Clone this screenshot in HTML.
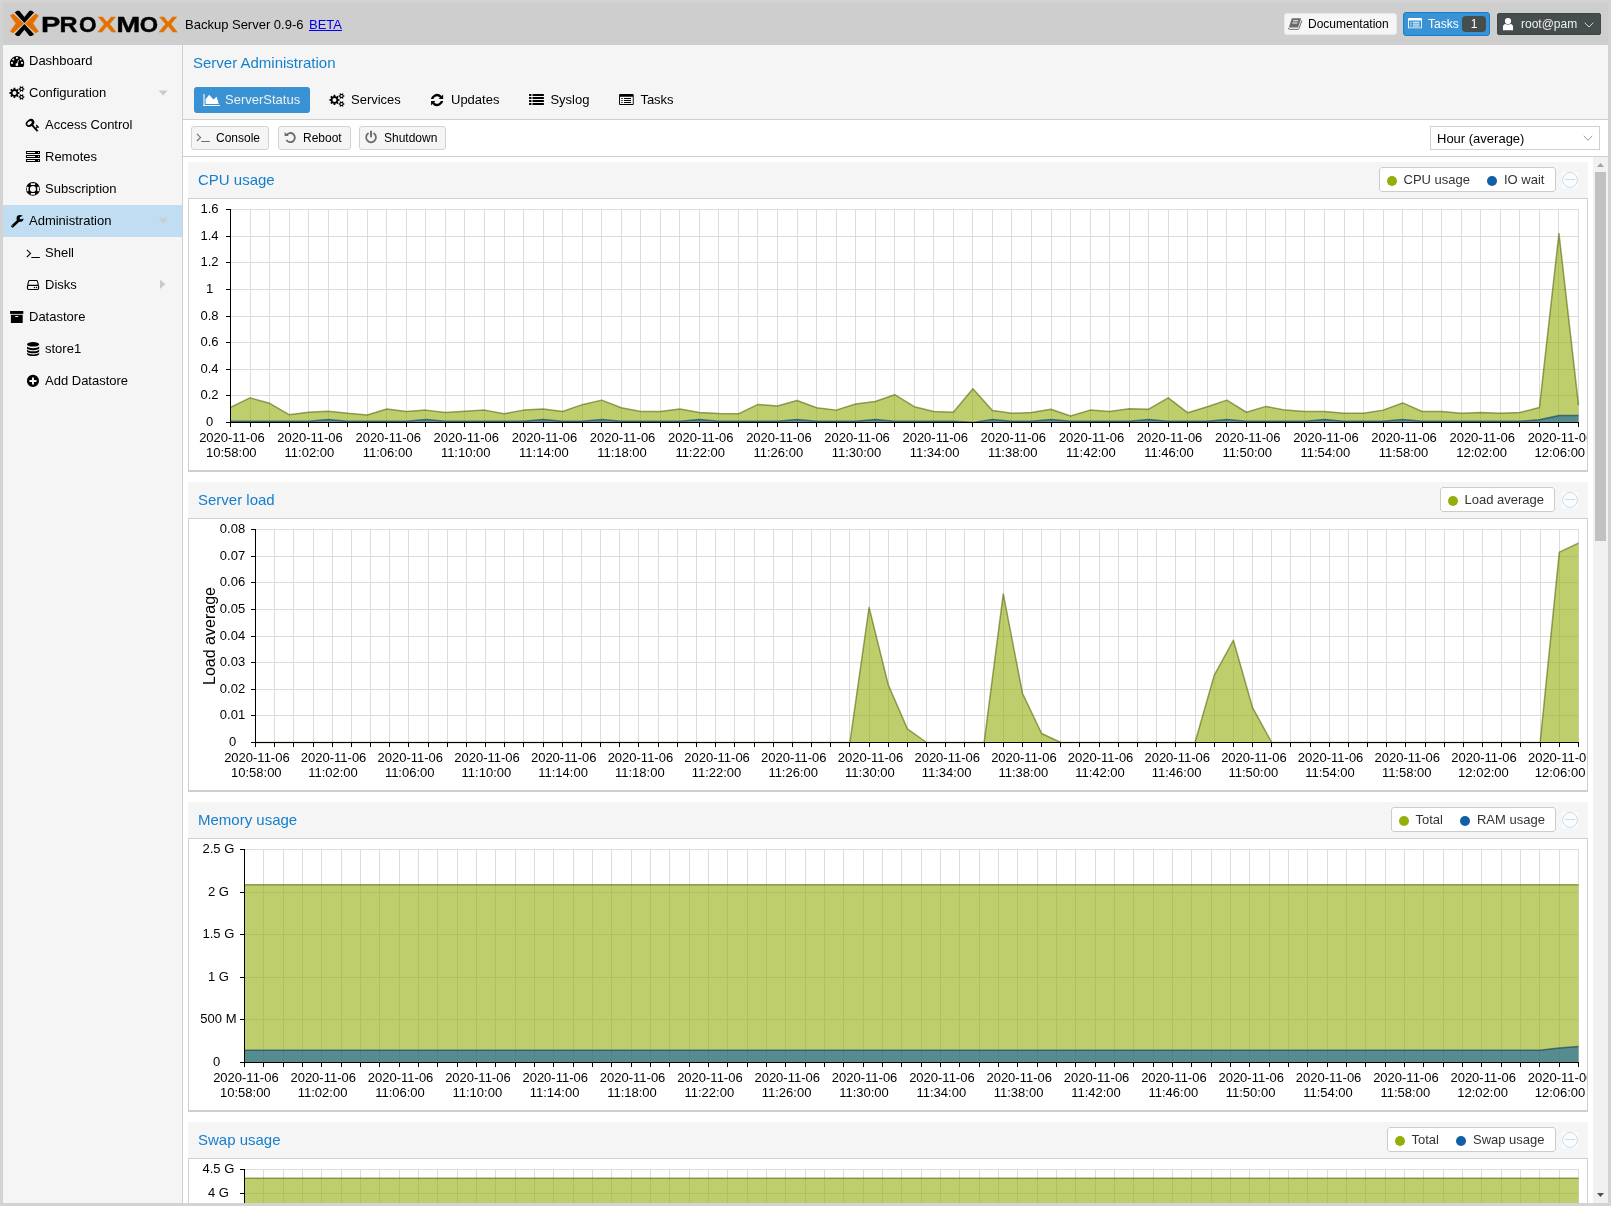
<!DOCTYPE html>
<html lang="en"><head><meta charset="utf-8"><title>Proxmox Backup Server - Server Administration</title>
<style>
html,body{margin:0;padding:0}
body{width:1611px;height:1206px;overflow:hidden;background:#d3d3d3;font-family:"Liberation Sans",sans-serif;font-size:13px;color:#000;position:relative}
div,span,svg,a{position:absolute;box-sizing:border-box}
.ic{overflow:visible}
#vp{left:3px;top:3px;width:1605px;height:1200px;background:#cecece;overflow:hidden}
#side{left:3px;top:45px;width:180px;height:1158px;background:#f5f5f5;border-right:1px solid #cfcfcf}
.row{left:0;width:179px;height:32px;line-height:32px;white-space:nowrap}
.row span{position:absolute;top:0}
.row.sel{background:#c1ddf1}
#main{left:183px;top:45px;width:1425px;height:1158px;background:#f5f5f5;overflow:hidden}
#title{left:10px;top:9px;font-size:15px;line-height:18px;color:#157fcc;white-space:nowrap}
#tabline{left:0;top:74px;width:1425px;height:1px;background:#cfcfcf}
.tab{top:42px;height:26px;line-height:26px;white-space:nowrap;font-size:13px;color:#000;border-radius:3px}
.tab.act{background:#3892d4;color:#f0f0f0}
#tbar{left:0;top:75px;width:1425px;height:37px;background:#fff;border-bottom:1px solid #cfcfcf}
.btn{top:6px;height:24px;background:#f5f5f5;border:1px solid #d3d3d3;border-radius:3px;font-size:12px;line-height:22px;white-space:nowrap;color:#000}
.btn span{left:24px;top:0}
#combo{left:1247px;top:6px;width:170px;height:24px;background:#fff;border:1px solid #cfcfcf;font-size:13px;line-height:22px}
#scroll{left:0;top:112px;width:1410px;height:1046px;background:#fff;overflow:hidden}
#sbar{left:1410px;top:112px;width:15px;height:1046px;background:#f1f1f1}
#thumb{left:2px;top:15px;width:11px;height:369px;background:#c1c1c1}
.ph{left:188px;width:1400px;height:36px;background:#f5f5f5}
.pt{left:10px;top:9px;font-size:15px;line-height:18px;color:#157fcc;white-space:nowrap}
.pb{left:188px;width:1400px;height:274px;background:#fff;border:1px solid #cfcfcf;border-bottom-width:2px}
.lg{height:25px;background:#fff;white-space:nowrap;font-size:13px;line-height:23px;color:#333;padding:1px}
.lg b{position:absolute;left:0;top:0;right:0;bottom:0;border:1px solid #ccc;border-radius:3px;box-sizing:border-box}
.li{position:relative;display:inline-block;padding:0 10.5px 0 23.5px;height:23px}
.li i{position:absolute;left:7px;top:8px;width:10px;height:10px;border-radius:5px}
.tool{left:1562px;width:16px;height:16px;background:#fcfcfc}
.tool svg{left:0;top:0}
.ch{overflow:hidden}
#page{left:0;top:0;width:1611px;height:1206px}
#root{left:0;top:0;width:1611px;height:1206px;will-change:transform}
</style></head><body>
<div id="root">
<div id="vp"></div>

<div id="hdr" style="left:3px;top:3px;width:1605px;height:42px">
<svg style="left:0;top:0" width="185" height="42" viewBox="3 3 185 42"><title>PROXMOX</title><path fill="#e57000" d="M10.0 15.4L13.3 13.5L23.8 23.4L13.3 33.3L10.0 31.5L15.7 23.4Z"/><path fill="#e57000" d="M38.8 15.4L35.5 13.5L25.0 23.4L35.5 33.3L38.8 31.5L33.1 23.4Z"/><path fill="#000" d="M14.7 12.6L17.0 10.8H19.3L24.4 17.0L29.5 10.8H31.8L34.1 12.6L24.4 22.9Z"/><path fill="#000" d="M14.7 34.2L17.0 36.0H19.3L24.4 29.8L29.5 36.0H31.8L34.1 34.2L24.4 23.9Z"/><text transform="translate(41.08,31.7) scale(1.279,1)" font-family='"Liberation Sans", sans-serif' font-weight="bold" font-size="22.7" fill="#000" stroke="#000" stroke-width="0.45" vector-effect="non-scaling-stroke" stroke-linejoin="round">P</text><text transform="translate(59.44,31.7) scale(1.104,1)" font-family='"Liberation Sans", sans-serif' font-weight="bold" font-size="22.7" fill="#000" stroke="#000" stroke-width="0.45" vector-effect="non-scaling-stroke" stroke-linejoin="round">R</text><text transform="translate(79.01,31.7) scale(0.994,1)" font-family='"Liberation Sans", sans-serif' font-weight="bold" font-size="22.7" fill="#000" stroke="#000" stroke-width="0.45" vector-effect="non-scaling-stroke" stroke-linejoin="round">O</text><text transform="translate(97.55,31.7) scale(1.238,1)" font-family='"Liberation Sans", sans-serif' font-weight="bold" font-size="22.7" fill="#e57000" stroke="#e57000" stroke-width="0.45" vector-effect="non-scaling-stroke" stroke-linejoin="round">X</text><text transform="translate(116.28,31.7) scale(1.277,1)" font-family='"Liberation Sans", sans-serif' font-weight="bold" font-size="22.7" fill="#000" stroke="#000" stroke-width="0.45" vector-effect="non-scaling-stroke" stroke-linejoin="round">M</text><text transform="translate(139.67,31.7) scale(1.038,1)" font-family='"Liberation Sans", sans-serif' font-weight="bold" font-size="22.7" fill="#000" stroke="#000" stroke-width="0.45" vector-effect="non-scaling-stroke" stroke-linejoin="round">O</text><text transform="translate(158.75,31.7) scale(1.238,1)" font-family='"Liberation Sans", sans-serif' font-weight="bold" font-size="22.7" fill="#e57000" stroke="#e57000" stroke-width="0.45" vector-effect="non-scaling-stroke" stroke-linejoin="round">X</text></svg>
<span style="left:182px;top:14px;font-size:13px;line-height:16px;white-space:nowrap">Backup Server 0.9-6</span>
<a style="left:306px;top:14px;font-size:13px;line-height:16px;color:#0000ee;text-decoration:underline;white-space:nowrap">BETA</a>
<div style="left:1281px;top:10px;width:113px;height:22px;background:#f5f5f5;border:1px solid #e9e9e9;border-radius:3px;font-size:12px;line-height:20px"><svg class="ic" style="left:2px;top:2.3px" width="15.6" height="15.6" viewBox="0 0 16 16" fill="#6b6b6b" color="#6b6b6b" ><path fill-rule="evenodd" d="M5.5 2.2H14.0Q14.6 2.2 14.4 2.8L11.6 11.2Q11.4 11.8 10.8 11.8H2.6Q1.8 11.8 2.1 11.0L4.8 2.9Q5.0 2.2 5.5 2.2ZM6.3 4.4L6.0 5.4H11.3L11.6 4.4ZM5.6 6.6L5.3 7.6H10.6L10.9 6.6Z"/><path d="M15.3 4.6L12.3 13.0Q12.1 13.7 11.3 13.7H2.8Q1.3 13.7 1.5 12.3" fill="none" stroke="currentColor" stroke-width="1.0"/></svg><span style="left:23px;top:0">Documentation</span></div>
<div style="left:1400px;top:9px;width:87px;height:24px;background:#3892d4;border:1px solid #157fd0;border-radius:3px;font-size:12px;line-height:22px;color:#fff"><svg class="ic" style="left:3px;top:3.1px" width="15.3" height="15.3" viewBox="0 0 16 16" fill="#fff" color="#fff" ><path fill-rule="evenodd" d="M2.1 1.97H14.7Q15.7 1.97 15.7 2.97V11.9Q15.7 12.9 14.7 12.9H2.1Q1.07 12.9 1.07 11.9V2.97Q1.07 1.97 2.1 1.97ZM2.0 4.75V12.0H14.8V4.75Z"/><rect x="3.1" y="6.0" width="1.7" height="1" opacity="0.75"/><rect x="6.0" y="6.0" width="7.0" height="1"/><rect x="3.1" y="8.0" width="1.7" height="1" opacity="0.75"/><rect x="6.0" y="8.0" width="7.0" height="1"/><rect x="3.1" y="10.0" width="1.7" height="1" opacity="0.75"/><rect x="6.0" y="10.0" width="7.0" height="1"/></svg><span style="left:24px;top:0">Tasks</span><span style="left:58px;top:3px;width:24px;height:16px;border-radius:4px;background:#464d4d;color:#fff;text-align:center;line-height:16px;font-size:12px">1</span></div>
<div style="left:1494px;top:10px;width:104px;height:22px;background:#464d4d;border:1px solid #3f4545;border-radius:2px;font-size:12px;line-height:20px;color:#f0f0f0"><svg class="ic" style="left:3px;top:3px" width="14" height="14" viewBox="0 0 16 16" fill="#fff" color="#fff" ><circle cx="8" cy="4.6" r="3.6"/><path d="M2.2 14.9V11.6Q2.2 8.2 5.2 7.9Q8 9.6 10.8 7.9Q13.8 8.2 13.8 11.6V14.9Q13.8 15.2 13 15.2H3Q2.2 15.2 2.2 14.9Z"/></svg><span style="left:23px;top:0">root@pam</span><svg style="left:86px;top:8px" width="10" height="6" viewBox="0 0 10 6"><path d="M0.7 0.7L5 5L9.3 0.7" fill="none" stroke="#d4d4d4" stroke-width="1.0"/></svg></div>
</div>
<div id="side">
<div class="row" style="top:0px"><svg class="ic" style="left:6px;top:8px" width="16" height="16" viewBox="0 0 16 16" fill="#000" color="#000" ><path d="M1.85 13.9 A7.2 7.2 0 1 1 14.2 13.9Z"/><circle cx="3.0" cy="9.9" r="1.05" fill="#f5f5f5"/><circle cx="4.3" cy="6.5" r="1.05" fill="#f5f5f5"/><circle cx="7.95" cy="4.9" r="1.05" fill="#f5f5f5"/><circle cx="11.7" cy="6.5" r="1.05" fill="#f5f5f5"/><circle cx="13.0" cy="9.9" r="1.05" fill="#f5f5f5"/><path d="M9.5 7.1L8.1 11.4" stroke="#f5f5f5" stroke-width="0.9" fill="none"/><circle cx="7.9" cy="11.7" r="1.35" fill="#f5f5f5"/></svg><span style="left:26px">Dashboard</span></div>
<div class="row" style="top:32px"><svg class="ic" style="left:6px;top:8px" width="16" height="16" viewBox="0 0 16 16" fill="#000" color="#000" ><path fill-rule="evenodd" d="M9.05 6.90L10.54 7.14L10.54 8.76L9.05 9.00L8.74 9.76L9.62 10.98L8.48 12.12L7.26 11.24L6.50 11.55L6.26 13.04L4.64 13.04L4.40 11.55L3.64 11.24L2.42 12.12L1.28 10.98L2.16 9.76L1.85 9.00L0.36 8.76L0.36 7.14L1.85 6.90L2.16 6.14L1.28 4.92L2.42 3.78L3.64 4.66L4.40 4.35L4.64 2.86L6.26 2.86L6.50 4.35L7.26 4.66L8.48 3.78L9.62 4.92L8.74 6.14ZM7.45 7.95A2.0 2.0 0 1 0 3.45 7.95A2.0 2.0 0 1 0 7.45 7.95Z"/><path fill-rule="evenodd" d="M14.36 3.26L15.39 3.39L15.39 4.61L14.36 4.74L14.07 5.24L14.47 6.19L13.41 6.81L12.79 5.98L12.21 5.98L11.59 6.81L10.53 6.19L10.93 5.24L10.64 4.74L9.61 4.61L9.61 3.39L10.64 3.26L10.93 2.76L10.53 1.81L11.59 1.19L12.21 2.02L12.79 2.02L13.41 1.19L14.47 1.81L14.07 2.76ZM13.55 4.00A1.05 1.05 0 1 0 11.45 4.00A1.05 1.05 0 1 0 13.55 4.00Z"/><path fill-rule="evenodd" d="M14.36 11.26L15.39 11.39L15.39 12.61L14.36 12.74L14.07 13.24L14.47 14.19L13.41 14.81L12.79 13.98L12.21 13.98L11.59 14.81L10.53 14.19L10.93 13.24L10.64 12.74L9.61 12.61L9.61 11.39L10.64 11.26L10.93 10.76L10.53 9.81L11.59 9.19L12.21 10.02L12.79 10.02L13.41 9.19L14.47 9.81L14.07 10.76ZM13.55 12.00A1.05 1.05 0 1 0 11.45 12.00A1.05 1.05 0 1 0 13.55 12.00Z"/></svg><span style="left:26px">Configuration</span><svg style="left:155px;top:13px" width="11" height="6" viewBox="0 0 11 6"><path d="M0.6 0.5H9.6L5.1 5.4Z" fill="#cbcbcb"/></svg></div>
<div class="row" style="top:64px"><svg class="ic" style="left:22px;top:8px" width="16" height="16" viewBox="0 0 16 16" fill="#000" color="#000" ><g transform="rotate(-37 5.05 5.95)"><path fill-rule="evenodd" d="M0.4 5.95A4.65 3.45 0 1 0 9.7 5.95A4.65 3.45 0 1 0 0.4 5.95ZM1.95 5.7A2.65 1.5 0 1 0 7.25 5.7A2.65 1.5 0 1 0 1.95 5.7Z"/></g><path d="M6.9 7.9L12.6 14.2" stroke-width="1.9" stroke="currentColor" fill="none"/><path d="M11.15 8.05L13.8 10.65M12.4 9.35L11.2 11.4" stroke-width="1.25" stroke="currentColor" fill="none"/></svg><span style="left:42px">Access Control</span></div>
<div class="row" style="top:96px"><svg class="ic" style="left:22px;top:8px" width="16" height="16" viewBox="0 0 16 16" fill="#000" color="#000" ><rect x="0.97" y="2" width="14.05" height="3" rx="0.3"/><rect x="1.9" y="3" width="8.2" height="1" rx="0.3" fill="#f5f5f5"/><circle cx="13.5" cy="3.5" r="0.6" fill="#f5f5f5"/><rect x="0.97" y="6" width="14.05" height="3" rx="0.3"/><rect x="1.9" y="7" width="8.2" height="1" rx="0.3" fill="#f5f5f5"/><circle cx="13.5" cy="7.5" r="0.6" fill="#f5f5f5"/><rect x="0.97" y="10" width="14.05" height="3" rx="0.3"/><rect x="1.9" y="11" width="8.2" height="1" rx="0.3" fill="#f5f5f5"/><circle cx="13.5" cy="11.5" r="0.6" fill="#f5f5f5"/></svg><span style="left:42px">Remotes</span></div>
<div class="row" style="top:128px"><svg class="ic" style="left:22px;top:8px" width="16" height="16" viewBox="0 0 16 16" fill="#000" color="#000" ><path fill-rule="evenodd" d="M14.90 7.90A6.97 6.97 0 1 0 0.96 7.90A6.97 6.97 0 1 0 14.90 7.90ZM10.93 7.90A3.0 3.0 0 1 0 4.93 7.90A3.0 3.0 0 1 0 10.93 7.90Z"/><rect x="5.75" y="2.2" width="4.40" height="1.85" rx="0.35" fill="#f5f5f5"/><rect x="5.75" y="11.95" width="4.40" height="1.75" rx="0.35" fill="#f5f5f5"/><rect x="1.75" y="5.8" width="1.75" height="4.35" rx="0.35" fill="#f5f5f5"/><rect x="12.2" y="5.8" width="1.80" height="4.35" rx="0.35" fill="#f5f5f5"/></svg><span style="left:42px">Subscription</span></div>
<div class="row sel" style="top:160px"><svg class="ic" style="left:6px;top:8px" width="16" height="16" viewBox="0 0 16 16" fill="#000" color="#000" ><path d="M3.5 13.2L9.6 7.5" stroke="currentColor" stroke-width="2.7" stroke-linecap="round" fill="none"/><circle cx="11.0" cy="5.4" r="3.45"/><path d="M12.0 4.95L16.5 3.3" stroke="#c1ddf1" stroke-width="2.55" stroke-linecap="round" fill="none"/><circle cx="3.7" cy="12.75" r="0.5" fill="#c1ddf1" opacity="0.8"/></svg><span style="left:26px">Administration</span><svg style="left:155px;top:13px" width="11" height="6" viewBox="0 0 11 6"><path d="M0.6 0.5H9.6L5.1 5.4Z" fill="#cbcbcb"/></svg></div>
<div class="row" style="top:192px"><svg class="ic" style="left:22px;top:8px" width="16" height="16" viewBox="0 0 16 16" fill="#000" color="#000" ><path d="M1.9 4.9L5.55 8.45L1.9 12.0" fill="none" stroke="currentColor" stroke-width="1.08"/><path d="M6.3 12.5H14.85" fill="none" stroke="currentColor" stroke-width="1"/></svg><span style="left:42px">Shell</span></div>
<div class="row" style="top:224px"><svg class="ic" style="left:22px;top:8px" width="16" height="16" viewBox="0 0 16 16" fill="#000" color="#000" ><path d="M2.6 8.3L3.75 3.95Q3.9 3.45 4.45 3.45H11.6Q12.15 3.45 12.3 3.95L13.45 8.3" fill="none" stroke="currentColor" stroke-width="1.05"/><rect x="2.45" y="8.3" width="11.15" height="4.2" rx="1.15" fill="none" stroke="currentColor" stroke-width="1.15"/><circle cx="9.42" cy="10.45" r="0.72"/><circle cx="11.5" cy="10.45" r="0.72"/></svg><span style="left:42px">Disks</span><svg style="left:157px;top:10px" width="6" height="11" viewBox="0 0 6 11"><path d="M0 0.6V9.9L5.4 5.25Z" fill="#cbcbcb"/></svg></div>
<div class="row" style="top:256px"><svg class="ic" style="left:6px;top:8px" width="16" height="16" viewBox="0 0 16 16" fill="#000" color="#000" ><rect x="1.1" y="2.0" width="13.2" height="2.9"/><path fill-rule="evenodd" d="M1.9 5.75H13.7V14H1.9ZM6.2 7.0V8.0H9.3V7.0Z"/></svg><span style="left:26px">Datastore</span></div>
<div class="row" style="top:288px"><svg class="ic" style="left:22px;top:8px" width="16" height="16" viewBox="0 0 16 16" fill="#000" color="#000" ><ellipse cx="8.1" cy="3.3" rx="6.1" ry="2.3"/><path d="M2 5.15A6.1 2.0 0 0 0 14.2 5.15V7.2A6.1 2.0 0 0 1 2 7.2ZM2 8.3A6.1 2.0 0 0 0 14.2 8.3V10.35A6.1 2.0 0 0 1 2 10.35ZM2 11.45A6.1 2.0 0 0 0 14.2 11.45V13.0A6.1 2.0 0 0 1 2 13.0Z"/></svg><span style="left:42px">store1</span></div>
<div class="row" style="top:320px"><svg class="ic" style="left:22px;top:8px" width="16" height="16" viewBox="0 0 16 16" fill="#000" color="#000" ><path fill-rule="evenodd" d="M14.00 7.90A6.05 6.05 0 1 0 1.90 7.90A6.05 6.05 0 1 0 14.00 7.90ZM6.95 4.4H8.95V6.9H11.5V8.9H8.95V11.45H6.95V8.9H4.4V6.9H6.95Z"/></svg><span style="left:42px">Add Datastore</span></div>
</div>
<div id="main">
<div id="title">Server Administration</div>
<div class="tab act" style="left:11px;width:116px"><svg class="ic" style="left:9px;top:5px" width="16" height="16" viewBox="0 0 16 16" fill="#fff" color="#fff" ><rect x="0" y="2" width="2.1" height="12" opacity="0.55"/><rect x="0.2" y="13" width="16.7" height="1"/><path d="M2.66 11.9V7.2L6.14 2.75L10.4 7.5L13.7 4.7L15.8 11.9Z"/></svg><span style="left:31px;top:0">ServerStatus</span></div>
<div class="tab" style="left:137px;width:90px"><svg class="ic" style="left:9px;top:5px" width="16" height="16" viewBox="0 0 16 16" fill="#000" color="#000" ><path fill-rule="evenodd" d="M9.05 6.90L10.54 7.14L10.54 8.76L9.05 9.00L8.74 9.76L9.62 10.98L8.48 12.12L7.26 11.24L6.50 11.55L6.26 13.04L4.64 13.04L4.40 11.55L3.64 11.24L2.42 12.12L1.28 10.98L2.16 9.76L1.85 9.00L0.36 8.76L0.36 7.14L1.85 6.90L2.16 6.14L1.28 4.92L2.42 3.78L3.64 4.66L4.40 4.35L4.64 2.86L6.26 2.86L6.50 4.35L7.26 4.66L8.48 3.78L9.62 4.92L8.74 6.14ZM7.45 7.95A2.0 2.0 0 1 0 3.45 7.95A2.0 2.0 0 1 0 7.45 7.95Z"/><path fill-rule="evenodd" d="M14.36 3.26L15.39 3.39L15.39 4.61L14.36 4.74L14.07 5.24L14.47 6.19L13.41 6.81L12.79 5.98L12.21 5.98L11.59 6.81L10.53 6.19L10.93 5.24L10.64 4.74L9.61 4.61L9.61 3.39L10.64 3.26L10.93 2.76L10.53 1.81L11.59 1.19L12.21 2.02L12.79 2.02L13.41 1.19L14.47 1.81L14.07 2.76ZM13.55 4.00A1.05 1.05 0 1 0 11.45 4.00A1.05 1.05 0 1 0 13.55 4.00Z"/><path fill-rule="evenodd" d="M14.36 11.26L15.39 11.39L15.39 12.61L14.36 12.74L14.07 13.24L14.47 14.19L13.41 14.81L12.79 13.98L12.21 13.98L11.59 14.81L10.53 14.19L10.93 13.24L10.64 12.74L9.61 12.61L9.61 11.39L10.64 11.26L10.93 10.76L10.53 9.81L11.59 9.19L12.21 10.02L12.79 10.02L13.41 9.19L14.47 9.81L14.07 10.76ZM13.55 12.00A1.05 1.05 0 1 0 11.45 12.00A1.05 1.05 0 1 0 13.55 12.00Z"/></svg><span style="left:31px;top:0">Services</span></div>
<div class="tab" style="left:237px;width:89px"><svg class="ic" style="left:9px;top:5px" width="16" height="16" viewBox="0 0 16 16" fill="#000" color="#000" ><clipPath id="rfa"><rect x="0" y="0" width="16" height="6.95"/></clipPath><clipPath id="rfb"><rect x="0" y="9.0" width="16" height="7"/></clipPath><path clip-path="url(#rfa)" d="M3.47 9.66A4.9 4.9 0 0 1 11.93 4.96" fill="none" stroke="currentColor" stroke-width="2.4"/><path clip-path="url(#rfb)" d="M12.67 6.30A4.9 4.9 0 0 1 4.21 11.00" fill="none" stroke="currentColor" stroke-width="2.4"/><path d="M14.1 2.4V6.95H9.7Z"/><path d="M2.04 13.56V9.0H6.44Z"/></svg><span style="left:31px;top:0">Updates</span></div>
<div class="tab" style="left:336.4px;width:80px"><svg class="ic" style="left:9px;top:5px" width="16" height="16" viewBox="0 0 16 16" fill="#000" color="#000" ><rect x="1.05" y="1.93" width="2.4" height="2.05" rx="0.3"/><rect x="4.5" y="1.93" width="11.4" height="2.05" rx="0.3"/><rect x="1.05" y="4.93" width="2.4" height="2.05" rx="0.3"/><rect x="4.5" y="4.93" width="11.4" height="2.05" rx="0.3"/><rect x="1.05" y="7.93" width="2.4" height="2.05" rx="0.3"/><rect x="4.5" y="7.93" width="11.4" height="2.05" rx="0.3"/><rect x="1.05" y="10.95" width="2.4" height="2.05" rx="0.3"/><rect x="4.5" y="10.95" width="11.4" height="2.05" rx="0.3"/></svg><span style="left:31px;top:0">Syslog</span></div>
<div class="tab" style="left:426.4px;width:74px"><svg class="ic" style="left:9px;top:5px" width="16" height="16" viewBox="0 0 16 16" fill="#000" color="#000" ><path fill-rule="evenodd" d="M2.1 1.97H14.7Q15.7 1.97 15.7 2.97V11.9Q15.7 12.9 14.7 12.9H2.1Q1.07 12.9 1.07 11.9V2.97Q1.07 1.97 2.1 1.97ZM2.0 4.75V12.0H14.8V4.75Z"/><rect x="3.1" y="6.0" width="1.7" height="1" opacity="0.75"/><rect x="6.0" y="6.0" width="7.0" height="1"/><rect x="3.1" y="8.0" width="1.7" height="1" opacity="0.75"/><rect x="6.0" y="8.0" width="7.0" height="1"/><rect x="3.1" y="10.0" width="1.7" height="1" opacity="0.75"/><rect x="6.0" y="10.0" width="7.0" height="1"/></svg><span style="left:31px;top:0">Tasks</span></div>
<div id="tabline"></div>
<div id="tbar">
<div class="btn" style="left:8px;width:78px"><svg class="ic" style="left:3.2px;top:2.2px" width="16" height="16" viewBox="0 0 16 16" fill="#6c6c6c" color="#6c6c6c" ><path d="M1.9 4.9L5.55 8.45L1.9 12.0" fill="none" stroke="currentColor" stroke-width="1.08"/><path d="M6.3 12.5H14.85" fill="none" stroke="currentColor" stroke-width="1"/></svg><span>Console</span></div>
<div class="btn" style="left:95px;width:73px"><svg class="ic" style="left:3.2px;top:2.2px" width="16" height="16" viewBox="0 0 16 16" fill="#6c6c6c" color="#6c6c6c" ><path d="M4.57 5.99A4.55 4.55 0 1 1 4.36 10.88" fill="none" stroke="currentColor" stroke-width="1.85"/><path d="M2.6 2.9V7.0H6.8Z"/></svg><span>Reboot</span></div>
<div class="btn" style="left:176px;width:87px"><svg class="ic" style="left:3.2px;top:2.2px" width="16" height="16" viewBox="0 0 16 16" fill="#6c6c6c" color="#6c6c6c" ><path d="M11.07 4.54A4.9 4.9 0 1 1 5.03 4.54" fill="none" stroke="currentColor" stroke-width="1.8" stroke-linecap="round"/><path d="M8.05 2.6V7.6" fill="none" stroke="currentColor" stroke-width="2" stroke-linecap="round"/></svg><span>Shutdown</span></div>
<div id="combo"><span style="left:6px;top:1px">Hour (average)</span><svg style="left:152.3px;top:7.6px" width="10" height="7" viewBox="0 0 10 7"><path d="M0.8 0.8L5 5.4L9.2 0.8" fill="none" stroke="#9a9a9a" stroke-width="1"/></svg></div>
</div>
<div id="scroll"></div>
<div id="sbar"><svg style="left:3px;top:5px" width="9" height="5" viewBox="0 0 9 5"><path d="M1 5L4.5 0.9L8 5Z" fill="#a3a3a3"/></svg><div id="thumb"></div><svg style="left:3px;top:1036px" width="9" height="5" viewBox="0 0 9 5"><path d="M1 0L4.5 4.1L8 0Z" fill="#505050"/></svg></div>
</div>
<div id="page" style="clip-path:inset(157px 18px 3px 183px)">
<div class="ph" style="top:162px"><span class="pt">CPU usage</span></div>
<div class="pb" style="top:198px"></div>
<div class="lg" style="left:1379px;top:167px;width:177px"><b></b><span class="li"><i style="background:#94ae0a"></i>CPU usage</span><span class="li"><i style="background:#115fa6"></i>IO wait</span></div>
<div class="tool" style="top:172px"><svg width="16" height="16" viewBox="0 0 16 16" opacity="0.3"><circle cx="8" cy="7.9" r="7.45" fill="none" stroke="#3892d4" stroke-width="1"/><path d="M3.05 7.5H13" stroke="#3892d4" stroke-width="1"/></svg></div>
<svg class="ch" style="left:189px;top:199px" width="1398" height="271" viewBox="0 0 1398 271" font-family='"Liberation Sans", sans-serif' font-size="13">
<path d="M61.5 10.0V223.0M80.5 10.0V223.0M100.5 10.0V223.0M119.5 10.0V223.0M139.5 10.0V223.0M158.5 10.0V223.0M178.5 10.0V223.0M197.5 10.0V223.0M217.5 10.0V223.0M236.5 10.0V223.0M256.5 10.0V223.0M275.5 10.0V223.0M295.5 10.0V223.0M315.5 10.0V223.0M334.5 10.0V223.0M354.5 10.0V223.0M373.5 10.0V223.0M393.5 10.0V223.0M412.5 10.0V223.0M432.5 10.0V223.0M451.5 10.0V223.0M471.5 10.0V223.0M490.5 10.0V223.0M510.5 10.0V223.0M529.5 10.0V223.0M549.5 10.0V223.0M568.5 10.0V223.0M588.5 10.0V223.0M608.5 10.0V223.0M627.5 10.0V223.0M647.5 10.0V223.0M666.5 10.0V223.0M686.5 10.0V223.0M705.5 10.0V223.0M725.5 10.0V223.0M744.5 10.0V223.0M764.5 10.0V223.0M783.5 10.0V223.0M803.5 10.0V223.0M822.5 10.0V223.0M842.5 10.0V223.0M862.5 10.0V223.0M881.5 10.0V223.0M901.5 10.0V223.0M920.5 10.0V223.0M940.5 10.0V223.0M959.5 10.0V223.0M979.5 10.0V223.0M998.5 10.0V223.0M1018.5 10.0V223.0M1037.5 10.0V223.0M1057.5 10.0V223.0M1076.5 10.0V223.0M1096.5 10.0V223.0M1115.5 10.0V223.0M1135.5 10.0V223.0M1155.5 10.0V223.0M1174.5 10.0V223.0M1194.5 10.0V223.0M1213.5 10.0V223.0M1233.5 10.0V223.0M1252.5 10.0V223.0M1272.5 10.0V223.0M1291.5 10.0V223.0M1311.5 10.0V223.0M1330.5 10.0V223.0M1350.5 10.0V223.0M1369.5 10.0V223.0M1389.5 10.0V223.0M42.0 196.5H1390.0M42.0 170.5H1390.0M42.0 143.5H1390.0M42.0 117.5H1390.0M42.0 90.5H1390.0M42.0 63.5H1390.0M42.0 37.5H1390.0M42.0 10.5H1390.0" stroke="#dcdcdc" stroke-width="1" fill="none"/>
<polygon points="41.50,223.50 41.50,208.32 61.04,198.87 80.57,204.33 100.11,215.65 119.64,213.25 139.18,212.18 158.72,214.31 178.25,215.91 197.79,210.05 217.33,212.45 236.86,211.12 256.40,213.52 275.93,212.18 295.47,211.12 315.01,214.85 334.54,211.12 354.08,210.05 373.62,212.45 393.15,205.66 412.69,201.13 432.22,208.72 451.76,212.45 471.30,212.45 490.83,210.05 510.37,213.52 529.91,214.58 549.44,214.85 568.98,205.40 588.51,206.99 608.05,201.53 627.59,208.72 647.12,211.12 666.66,205.00 686.20,202.47 705.73,195.68 725.27,207.66 744.80,212.45 764.34,213.25 783.88,189.82 803.41,211.39 822.95,214.31 842.49,213.52 862.02,210.19 881.56,216.98 901.09,211.12 920.63,212.45 940.17,209.79 959.70,210.19 979.24,198.87 998.78,213.78 1018.31,207.79 1037.85,201.13 1057.38,213.25 1076.92,207.39 1096.46,211.12 1115.99,212.45 1135.53,212.45 1155.07,214.31 1174.60,214.31 1194.14,211.12 1213.67,203.93 1233.21,212.45 1252.75,212.45 1272.28,214.31 1291.82,213.52 1311.36,214.31 1330.89,213.52 1350.43,208.46 1369.96,34.46 1389.50,206.19 1389.50,223.50" fill="#94ae0a" fill-opacity="0.6"/><polyline points="41.50,208.32 61.04,198.87 80.57,204.33 100.11,215.65 119.64,213.25 139.18,212.18 158.72,214.31 178.25,215.91 197.79,210.05 217.33,212.45 236.86,211.12 256.40,213.52 275.93,212.18 295.47,211.12 315.01,214.85 334.54,211.12 354.08,210.05 373.62,212.45 393.15,205.66 412.69,201.13 432.22,208.72 451.76,212.45 471.30,212.45 490.83,210.05 510.37,213.52 529.91,214.58 549.44,214.85 568.98,205.40 588.51,206.99 608.05,201.53 627.59,208.72 647.12,211.12 666.66,205.00 686.20,202.47 705.73,195.68 725.27,207.66 744.80,212.45 764.34,213.25 783.88,189.82 803.41,211.39 822.95,214.31 842.49,213.52 862.02,210.19 881.56,216.98 901.09,211.12 920.63,212.45 940.17,209.79 959.70,210.19 979.24,198.87 998.78,213.78 1018.31,207.79 1037.85,201.13 1057.38,213.25 1076.92,207.39 1096.46,211.12 1115.99,212.45 1135.53,212.45 1155.07,214.31 1174.60,214.31 1194.14,211.12 1213.67,203.93 1233.21,212.45 1252.75,212.45 1272.28,214.31 1291.82,213.52 1311.36,214.31 1330.89,213.52 1350.43,208.46 1369.96,34.46 1389.50,206.19" fill="none" stroke="#566506" stroke-opacity="0.6" stroke-width="1.5" stroke-linejoin="round"/>
<polygon points="41.50,223.50 41.50,222.17 61.04,222.17 80.57,222.17 100.11,222.17 119.64,222.17 139.18,220.57 158.72,222.17 178.25,222.17 197.79,222.17 217.33,222.17 236.86,220.57 256.40,222.17 275.93,222.17 295.47,222.17 315.01,222.17 334.54,222.17 354.08,220.57 373.62,222.17 393.15,222.17 412.69,220.57 432.22,222.17 451.76,222.17 471.30,222.17 490.83,222.17 510.37,220.57 529.91,222.17 549.44,222.17 568.98,222.17 588.51,222.17 608.05,220.57 627.59,222.17 647.12,222.17 666.66,222.17 686.20,220.57 705.73,222.17 725.27,222.17 744.80,222.17 764.34,222.17 783.88,223.37 803.41,220.57 822.95,222.17 842.49,222.17 862.02,220.57 881.56,222.17 901.09,222.17 920.63,222.17 940.17,222.17 959.70,220.57 979.24,222.17 998.78,222.17 1018.31,222.17 1037.85,220.57 1057.38,222.17 1076.92,222.17 1096.46,222.17 1115.99,222.17 1135.53,220.57 1155.07,222.17 1174.60,222.17 1194.14,222.17 1213.67,220.57 1233.21,222.17 1252.75,222.17 1272.28,222.17 1291.82,222.17 1311.36,222.17 1330.89,222.17 1350.43,220.84 1369.96,216.44 1389.50,216.44 1389.50,223.50" fill="#115fa6" fill-opacity="0.6"/><polyline points="41.50,222.17 61.04,222.17 80.57,222.17 100.11,222.17 119.64,222.17 139.18,220.57 158.72,222.17 178.25,222.17 197.79,222.17 217.33,222.17 236.86,220.57 256.40,222.17 275.93,222.17 295.47,222.17 315.01,222.17 334.54,222.17 354.08,220.57 373.62,222.17 393.15,222.17 412.69,220.57 432.22,222.17 451.76,222.17 471.30,222.17 490.83,222.17 510.37,220.57 529.91,222.17 549.44,222.17 568.98,222.17 588.51,222.17 608.05,220.57 627.59,222.17 647.12,222.17 666.66,222.17 686.20,220.57 705.73,222.17 725.27,222.17 744.80,222.17 764.34,222.17 783.88,223.37 803.41,220.57 822.95,222.17 842.49,222.17 862.02,220.57 881.56,222.17 901.09,222.17 920.63,222.17 940.17,222.17 959.70,220.57 979.24,222.17 998.78,222.17 1018.31,222.17 1037.85,220.57 1057.38,222.17 1076.92,222.17 1096.46,222.17 1115.99,222.17 1135.53,220.57 1155.07,222.17 1174.60,222.17 1194.14,222.17 1213.67,220.57 1233.21,222.17 1252.75,222.17 1272.28,222.17 1291.82,222.17 1311.36,222.17 1330.89,222.17 1350.43,220.84 1369.96,216.44 1389.50,216.44" fill="none" stroke="#0a3861" stroke-opacity="0.6" stroke-width="1.5" stroke-linejoin="round"/>
<path d="M41.5 10.0V224.0M41.0 223.5H1390.0M37.0 223.5H41.5M37.0 196.5H41.5M37.0 170.5H41.5M37.0 143.5H41.5M37.0 117.5H41.5M37.0 90.5H41.5M37.0 63.5H41.5M37.0 37.5H41.5M37.0 10.5H41.5M41.5 223.5V228.0M61.5 223.5V228.0M80.5 223.5V228.0M100.5 223.5V228.0M119.5 223.5V228.0M139.5 223.5V228.0M158.5 223.5V228.0M178.5 223.5V228.0M197.5 223.5V228.0M217.5 223.5V228.0M236.5 223.5V228.0M256.5 223.5V228.0M275.5 223.5V228.0M295.5 223.5V228.0M315.5 223.5V228.0M334.5 223.5V228.0M354.5 223.5V228.0M373.5 223.5V228.0M393.5 223.5V228.0M412.5 223.5V228.0M432.5 223.5V228.0M451.5 223.5V228.0M471.5 223.5V228.0M490.5 223.5V228.0M510.5 223.5V228.0M529.5 223.5V228.0M549.5 223.5V228.0M568.5 223.5V228.0M588.5 223.5V228.0M608.5 223.5V228.0M627.5 223.5V228.0M647.5 223.5V228.0M666.5 223.5V228.0M686.5 223.5V228.0M705.5 223.5V228.0M725.5 223.5V228.0M744.5 223.5V228.0M764.5 223.5V228.0M783.5 223.5V228.0M803.5 223.5V228.0M822.5 223.5V228.0M842.5 223.5V228.0M862.5 223.5V228.0M881.5 223.5V228.0M901.5 223.5V228.0M920.5 223.5V228.0M940.5 223.5V228.0M959.5 223.5V228.0M979.5 223.5V228.0M998.5 223.5V228.0M1018.5 223.5V228.0M1037.5 223.5V228.0M1057.5 223.5V228.0M1076.5 223.5V228.0M1096.5 223.5V228.0M1115.5 223.5V228.0M1135.5 223.5V228.0M1155.5 223.5V228.0M1174.5 223.5V228.0M1194.5 223.5V228.0M1213.5 223.5V228.0M1233.5 223.5V228.0M1252.5 223.5V228.0M1272.5 223.5V228.0M1291.5 223.5V228.0M1311.5 223.5V228.0M1330.5 223.5V228.0M1350.5 223.5V228.0M1369.5 223.5V228.0M1389.5 223.5V228.0" stroke="#000" stroke-width="1" fill="none"/>
<text x="20.5" y="227.1" text-anchor="middle">0</text>
<text x="20.5" y="200.1" text-anchor="middle">0.2</text>
<text x="20.5" y="174.1" text-anchor="middle">0.4</text>
<text x="20.5" y="147.1" text-anchor="middle">0.6</text>
<text x="20.5" y="121.1" text-anchor="middle">0.8</text>
<text x="20.5" y="94.1" text-anchor="middle">1</text>
<text x="20.5" y="67.1" text-anchor="middle">1.2</text>
<text x="20.5" y="41.1" text-anchor="middle">1.4</text>
<text x="20.5" y="14.1" text-anchor="middle">1.6</text>
<text x="42.9" y="242.9" text-anchor="middle">2020-11-06</text>
<text x="42.3" y="258.1" text-anchor="middle">10:58:00</text>
<text x="121.0" y="242.9" text-anchor="middle">2020-11-06</text>
<text x="120.4" y="258.1" text-anchor="middle">11:02:00</text>
<text x="199.2" y="242.9" text-anchor="middle">2020-11-06</text>
<text x="198.6" y="258.1" text-anchor="middle">11:06:00</text>
<text x="277.3" y="242.9" text-anchor="middle">2020-11-06</text>
<text x="276.7" y="258.1" text-anchor="middle">11:10:00</text>
<text x="355.5" y="242.9" text-anchor="middle">2020-11-06</text>
<text x="354.9" y="258.1" text-anchor="middle">11:14:00</text>
<text x="433.6" y="242.9" text-anchor="middle">2020-11-06</text>
<text x="433.0" y="258.1" text-anchor="middle">11:18:00</text>
<text x="511.8" y="242.9" text-anchor="middle">2020-11-06</text>
<text x="511.2" y="258.1" text-anchor="middle">11:22:00</text>
<text x="589.9" y="242.9" text-anchor="middle">2020-11-06</text>
<text x="589.3" y="258.1" text-anchor="middle">11:26:00</text>
<text x="668.1" y="242.9" text-anchor="middle">2020-11-06</text>
<text x="667.5" y="258.1" text-anchor="middle">11:30:00</text>
<text x="746.2" y="242.9" text-anchor="middle">2020-11-06</text>
<text x="745.6" y="258.1" text-anchor="middle">11:34:00</text>
<text x="824.3" y="242.9" text-anchor="middle">2020-11-06</text>
<text x="823.7" y="258.1" text-anchor="middle">11:38:00</text>
<text x="902.5" y="242.9" text-anchor="middle">2020-11-06</text>
<text x="901.9" y="258.1" text-anchor="middle">11:42:00</text>
<text x="980.6" y="242.9" text-anchor="middle">2020-11-06</text>
<text x="980.0" y="258.1" text-anchor="middle">11:46:00</text>
<text x="1058.8" y="242.9" text-anchor="middle">2020-11-06</text>
<text x="1058.2" y="258.1" text-anchor="middle">11:50:00</text>
<text x="1136.9" y="242.9" text-anchor="middle">2020-11-06</text>
<text x="1136.3" y="258.1" text-anchor="middle">11:54:00</text>
<text x="1215.1" y="242.9" text-anchor="middle">2020-11-06</text>
<text x="1214.5" y="258.1" text-anchor="middle">11:58:00</text>
<text x="1293.2" y="242.9" text-anchor="middle">2020-11-06</text>
<text x="1292.6" y="258.1" text-anchor="middle">12:02:00</text>
<text x="1371.4" y="242.9" text-anchor="middle">2020-11-06</text>
<text x="1370.8" y="258.1" text-anchor="middle">12:06:00</text>
</svg>
<div class="ph" style="top:482px"><span class="pt">Server load</span></div>
<div class="pb" style="top:518px"></div>
<div class="lg" style="left:1440px;top:487px;width:115px"><b></b><span class="li"><i style="background:#94ae0a"></i>Load average</span></div>
<div class="tool" style="top:492px"><svg width="16" height="16" viewBox="0 0 16 16" opacity="0.3"><circle cx="8" cy="7.9" r="7.45" fill="none" stroke="#3892d4" stroke-width="1"/><path d="M3.05 7.5H13" stroke="#3892d4" stroke-width="1"/></svg></div>
<svg class="ch" style="left:189px;top:519px" width="1398" height="271" viewBox="0 0 1398 271" font-family='"Liberation Sans", sans-serif' font-size="13">
<path d="M85.5 10.0V223.0M104.5 10.0V223.0M124.5 10.0V223.0M143.5 10.0V223.0M162.5 10.0V223.0M181.5 10.0V223.0M200.5 10.0V223.0M219.5 10.0V223.0M239.5 10.0V223.0M258.5 10.0V223.0M277.5 10.0V223.0M296.5 10.0V223.0M315.5 10.0V223.0M334.5 10.0V223.0M354.5 10.0V223.0M373.5 10.0V223.0M392.5 10.0V223.0M411.5 10.0V223.0M430.5 10.0V223.0M449.5 10.0V223.0M469.5 10.0V223.0M488.5 10.0V223.0M507.5 10.0V223.0M526.5 10.0V223.0M545.5 10.0V223.0M565.5 10.0V223.0M584.5 10.0V223.0M603.5 10.0V223.0M622.5 10.0V223.0M641.5 10.0V223.0M660.5 10.0V223.0M680.5 10.0V223.0M699.5 10.0V223.0M718.5 10.0V223.0M737.5 10.0V223.0M756.5 10.0V223.0M775.5 10.0V223.0M795.5 10.0V223.0M814.5 10.0V223.0M833.5 10.0V223.0M852.5 10.0V223.0M871.5 10.0V223.0M890.5 10.0V223.0M910.5 10.0V223.0M929.5 10.0V223.0M948.5 10.0V223.0M967.5 10.0V223.0M986.5 10.0V223.0M1006.5 10.0V223.0M1025.5 10.0V223.0M1044.5 10.0V223.0M1063.5 10.0V223.0M1082.5 10.0V223.0M1101.5 10.0V223.0M1121.5 10.0V223.0M1140.5 10.0V223.0M1159.5 10.0V223.0M1178.5 10.0V223.0M1197.5 10.0V223.0M1216.5 10.0V223.0M1236.5 10.0V223.0M1255.5 10.0V223.0M1274.5 10.0V223.0M1293.5 10.0V223.0M1312.5 10.0V223.0M1331.5 10.0V223.0M1351.5 10.0V223.0M1370.5 10.0V223.0M1389.5 10.0V223.0M67.0 196.5H1390.0M67.0 170.5H1390.0M67.0 143.5H1390.0M67.0 117.5H1390.0M67.0 90.5H1390.0M67.0 63.5H1390.0M67.0 37.5H1390.0M67.0 10.5H1390.0" stroke="#dcdcdc" stroke-width="1" fill="none"/>
<polygon points="66.50,223.50 66.50,223.50 85.67,223.50 104.85,223.50 124.02,223.50 143.20,223.50 162.37,223.50 181.54,223.50 200.72,223.50 219.89,223.50 239.07,223.50 258.24,223.50 277.41,223.50 296.59,223.50 315.76,223.50 334.93,223.50 354.11,223.50 373.28,223.50 392.46,223.50 411.63,223.50 430.80,223.50 449.98,223.50 469.15,223.50 488.33,223.50 507.50,223.50 526.67,223.50 545.85,223.50 565.02,223.50 584.20,223.50 603.37,223.50 622.54,223.50 641.72,223.50 660.89,223.50 680.07,88.51 699.24,165.72 718.41,209.92 737.59,223.50 756.76,223.50 775.93,223.50 795.11,223.50 814.28,74.93 833.46,174.24 852.63,214.45 871.80,223.50 890.98,223.50 910.15,223.50 929.33,223.50 948.50,223.50 967.67,223.50 986.85,223.50 1006.02,223.50 1025.20,156.41 1044.37,121.26 1063.54,188.62 1082.72,223.50 1101.89,223.50 1121.07,223.50 1140.24,223.50 1159.41,223.50 1178.59,223.50 1197.76,223.50 1216.93,223.50 1236.11,223.50 1255.28,223.50 1274.46,223.50 1293.63,223.50 1312.80,223.50 1331.98,223.50 1351.15,223.50 1370.33,33.13 1389.50,24.08 1389.50,223.50" fill="#94ae0a" fill-opacity="0.6"/><polyline points="66.50,223.50 85.67,223.50 104.85,223.50 124.02,223.50 143.20,223.50 162.37,223.50 181.54,223.50 200.72,223.50 219.89,223.50 239.07,223.50 258.24,223.50 277.41,223.50 296.59,223.50 315.76,223.50 334.93,223.50 354.11,223.50 373.28,223.50 392.46,223.50 411.63,223.50 430.80,223.50 449.98,223.50 469.15,223.50 488.33,223.50 507.50,223.50 526.67,223.50 545.85,223.50 565.02,223.50 584.20,223.50 603.37,223.50 622.54,223.50 641.72,223.50 660.89,223.50 680.07,88.51 699.24,165.72 718.41,209.92 737.59,223.50 756.76,223.50 775.93,223.50 795.11,223.50 814.28,74.93 833.46,174.24 852.63,214.45 871.80,223.50 890.98,223.50 910.15,223.50 929.33,223.50 948.50,223.50 967.67,223.50 986.85,223.50 1006.02,223.50 1025.20,156.41 1044.37,121.26 1063.54,188.62 1082.72,223.50 1101.89,223.50 1121.07,223.50 1140.24,223.50 1159.41,223.50 1178.59,223.50 1197.76,223.50 1216.93,223.50 1236.11,223.50 1255.28,223.50 1274.46,223.50 1293.63,223.50 1312.80,223.50 1331.98,223.50 1351.15,223.50 1370.33,33.13 1389.50,24.08" fill="none" stroke="#566506" stroke-opacity="0.6" stroke-width="1.5" stroke-linejoin="round"/>
<path d="M66.5 10.0V224.0M66.0 223.5H1390.0M62.0 223.5H66.5M62.0 196.5H66.5M62.0 170.5H66.5M62.0 143.5H66.5M62.0 117.5H66.5M62.0 90.5H66.5M62.0 63.5H66.5M62.0 37.5H66.5M62.0 10.5H66.5M66.5 223.5V228.0M85.5 223.5V228.0M104.5 223.5V228.0M124.5 223.5V228.0M143.5 223.5V228.0M162.5 223.5V228.0M181.5 223.5V228.0M200.5 223.5V228.0M219.5 223.5V228.0M239.5 223.5V228.0M258.5 223.5V228.0M277.5 223.5V228.0M296.5 223.5V228.0M315.5 223.5V228.0M334.5 223.5V228.0M354.5 223.5V228.0M373.5 223.5V228.0M392.5 223.5V228.0M411.5 223.5V228.0M430.5 223.5V228.0M449.5 223.5V228.0M469.5 223.5V228.0M488.5 223.5V228.0M507.5 223.5V228.0M526.5 223.5V228.0M545.5 223.5V228.0M565.5 223.5V228.0M584.5 223.5V228.0M603.5 223.5V228.0M622.5 223.5V228.0M641.5 223.5V228.0M660.5 223.5V228.0M680.5 223.5V228.0M699.5 223.5V228.0M718.5 223.5V228.0M737.5 223.5V228.0M756.5 223.5V228.0M775.5 223.5V228.0M795.5 223.5V228.0M814.5 223.5V228.0M833.5 223.5V228.0M852.5 223.5V228.0M871.5 223.5V228.0M890.5 223.5V228.0M910.5 223.5V228.0M929.5 223.5V228.0M948.5 223.5V228.0M967.5 223.5V228.0M986.5 223.5V228.0M1006.5 223.5V228.0M1025.5 223.5V228.0M1044.5 223.5V228.0M1063.5 223.5V228.0M1082.5 223.5V228.0M1101.5 223.5V228.0M1121.5 223.5V228.0M1140.5 223.5V228.0M1159.5 223.5V228.0M1178.5 223.5V228.0M1197.5 223.5V228.0M1216.5 223.5V228.0M1236.5 223.5V228.0M1255.5 223.5V228.0M1274.5 223.5V228.0M1293.5 223.5V228.0M1312.5 223.5V228.0M1331.5 223.5V228.0M1351.5 223.5V228.0M1370.5 223.5V228.0M1389.5 223.5V228.0" stroke="#000" stroke-width="1" fill="none"/>
<text x="43.5" y="227.1" text-anchor="middle">0</text>
<text x="43.5" y="200.1" text-anchor="middle">0.01</text>
<text x="43.5" y="174.1" text-anchor="middle">0.02</text>
<text x="43.5" y="147.1" text-anchor="middle">0.03</text>
<text x="43.5" y="121.1" text-anchor="middle">0.04</text>
<text x="43.5" y="94.1" text-anchor="middle">0.05</text>
<text x="43.5" y="67.1" text-anchor="middle">0.06</text>
<text x="43.5" y="41.1" text-anchor="middle">0.07</text>
<text x="43.5" y="14.1" text-anchor="middle">0.08</text>
<text x="67.9" y="242.9" text-anchor="middle">2020-11-06</text>
<text x="67.3" y="258.1" text-anchor="middle">10:58:00</text>
<text x="144.6" y="242.9" text-anchor="middle">2020-11-06</text>
<text x="144.0" y="258.1" text-anchor="middle">11:02:00</text>
<text x="221.3" y="242.9" text-anchor="middle">2020-11-06</text>
<text x="220.7" y="258.1" text-anchor="middle">11:06:00</text>
<text x="298.0" y="242.9" text-anchor="middle">2020-11-06</text>
<text x="297.4" y="258.1" text-anchor="middle">11:10:00</text>
<text x="374.7" y="242.9" text-anchor="middle">2020-11-06</text>
<text x="374.1" y="258.1" text-anchor="middle">11:14:00</text>
<text x="451.4" y="242.9" text-anchor="middle">2020-11-06</text>
<text x="450.8" y="258.1" text-anchor="middle">11:18:00</text>
<text x="528.1" y="242.9" text-anchor="middle">2020-11-06</text>
<text x="527.5" y="258.1" text-anchor="middle">11:22:00</text>
<text x="604.8" y="242.9" text-anchor="middle">2020-11-06</text>
<text x="604.2" y="258.1" text-anchor="middle">11:26:00</text>
<text x="681.5" y="242.9" text-anchor="middle">2020-11-06</text>
<text x="680.9" y="258.1" text-anchor="middle">11:30:00</text>
<text x="758.2" y="242.9" text-anchor="middle">2020-11-06</text>
<text x="757.6" y="258.1" text-anchor="middle">11:34:00</text>
<text x="834.9" y="242.9" text-anchor="middle">2020-11-06</text>
<text x="834.3" y="258.1" text-anchor="middle">11:38:00</text>
<text x="911.6" y="242.9" text-anchor="middle">2020-11-06</text>
<text x="911.0" y="258.1" text-anchor="middle">11:42:00</text>
<text x="988.2" y="242.9" text-anchor="middle">2020-11-06</text>
<text x="987.6" y="258.1" text-anchor="middle">11:46:00</text>
<text x="1064.9" y="242.9" text-anchor="middle">2020-11-06</text>
<text x="1064.3" y="258.1" text-anchor="middle">11:50:00</text>
<text x="1141.6" y="242.9" text-anchor="middle">2020-11-06</text>
<text x="1141.0" y="258.1" text-anchor="middle">11:54:00</text>
<text x="1218.3" y="242.9" text-anchor="middle">2020-11-06</text>
<text x="1217.7" y="258.1" text-anchor="middle">11:58:00</text>
<text x="1295.0" y="242.9" text-anchor="middle">2020-11-06</text>
<text x="1294.4" y="258.1" text-anchor="middle">12:02:00</text>
<text x="1371.7" y="242.9" text-anchor="middle">2020-11-06</text>
<text x="1371.1" y="258.1" text-anchor="middle">12:06:00</text>
<text transform="translate(26.0,117.0) rotate(-90)" text-anchor="middle" font-size="16">Load average</text>
</svg>
<div class="ph" style="top:802px"><span class="pt">Memory usage</span></div>
<div class="pb" style="top:838px"></div>
<div class="lg" style="left:1391px;top:807px;width:165px"><b></b><span class="li"><i style="background:#94ae0a"></i>Total</span><span class="li"><i style="background:#115fa6"></i>RAM usage</span></div>
<div class="tool" style="top:812px"><svg width="16" height="16" viewBox="0 0 16 16" opacity="0.3"><circle cx="8" cy="7.9" r="7.45" fill="none" stroke="#3892d4" stroke-width="1"/><path d="M3.05 7.5H13" stroke="#3892d4" stroke-width="1"/></svg></div>
<svg class="ch" style="left:189px;top:839px" width="1398" height="271" viewBox="0 0 1398 271" font-family='"Liberation Sans", sans-serif' font-size="13">
<path d="M74.5 10.0V223.0M94.5 10.0V223.0M113.5 10.0V223.0M132.5 10.0V223.0M152.5 10.0V223.0M171.5 10.0V223.0M190.5 10.0V223.0M210.5 10.0V223.0M229.5 10.0V223.0M248.5 10.0V223.0M268.5 10.0V223.0M287.5 10.0V223.0M306.5 10.0V223.0M326.5 10.0V223.0M345.5 10.0V223.0M364.5 10.0V223.0M384.5 10.0V223.0M403.5 10.0V223.0M422.5 10.0V223.0M442.5 10.0V223.0M461.5 10.0V223.0M480.5 10.0V223.0M500.5 10.0V223.0M519.5 10.0V223.0M538.5 10.0V223.0M558.5 10.0V223.0M577.5 10.0V223.0M596.5 10.0V223.0M616.5 10.0V223.0M635.5 10.0V223.0M654.5 10.0V223.0M674.5 10.0V223.0M693.5 10.0V223.0M712.5 10.0V223.0M732.5 10.0V223.0M751.5 10.0V223.0M770.5 10.0V223.0M790.5 10.0V223.0M809.5 10.0V223.0M828.5 10.0V223.0M848.5 10.0V223.0M867.5 10.0V223.0M886.5 10.0V223.0M906.5 10.0V223.0M925.5 10.0V223.0M944.5 10.0V223.0M964.5 10.0V223.0M983.5 10.0V223.0M1002.5 10.0V223.0M1022.5 10.0V223.0M1041.5 10.0V223.0M1060.5 10.0V223.0M1080.5 10.0V223.0M1099.5 10.0V223.0M1118.5 10.0V223.0M1138.5 10.0V223.0M1157.5 10.0V223.0M1176.5 10.0V223.0M1196.5 10.0V223.0M1215.5 10.0V223.0M1234.5 10.0V223.0M1254.5 10.0V223.0M1273.5 10.0V223.0M1292.5 10.0V223.0M1312.5 10.0V223.0M1331.5 10.0V223.0M1350.5 10.0V223.0M1370.5 10.0V223.0M1389.5 10.0V223.0M56.0 180.5H1390.0M56.0 138.5H1390.0M56.0 95.5H1390.0M56.0 53.5H1390.0M56.0 10.5H1390.0" stroke="#dcdcdc" stroke-width="1" fill="none"/>
<polygon points="55.50,223.50 55.50,45.65 74.83,45.65 94.17,45.65 113.50,45.65 132.83,45.65 152.17,45.65 171.50,45.65 190.83,45.65 210.17,45.65 229.50,45.65 248.83,45.65 268.17,45.65 287.50,45.65 306.83,45.65 326.17,45.65 345.50,45.65 364.83,45.65 384.17,45.65 403.50,45.65 422.83,45.65 442.17,45.65 461.50,45.65 480.83,45.65 500.17,45.65 519.50,45.65 538.83,45.65 558.17,45.65 577.50,45.65 596.83,45.65 616.17,45.65 635.50,45.65 654.83,45.65 674.17,45.65 693.50,45.65 712.83,45.65 732.17,45.65 751.50,45.65 770.83,45.65 790.17,45.65 809.50,45.65 828.83,45.65 848.17,45.65 867.50,45.65 886.83,45.65 906.17,45.65 925.50,45.65 944.83,45.65 964.17,45.65 983.50,45.65 1002.83,45.65 1022.17,45.65 1041.50,45.65 1060.83,45.65 1080.17,45.65 1099.50,45.65 1118.83,45.65 1138.17,45.65 1157.50,45.65 1176.83,45.65 1196.17,45.65 1215.50,45.65 1234.83,45.65 1254.17,45.65 1273.50,45.65 1292.83,45.65 1312.17,45.65 1331.50,45.65 1350.83,45.65 1370.17,45.65 1389.50,45.65 1389.50,223.50" fill="#94ae0a" fill-opacity="0.6"/><polyline points="55.50,45.65 74.83,45.65 94.17,45.65 113.50,45.65 132.83,45.65 152.17,45.65 171.50,45.65 190.83,45.65 210.17,45.65 229.50,45.65 248.83,45.65 268.17,45.65 287.50,45.65 306.83,45.65 326.17,45.65 345.50,45.65 364.83,45.65 384.17,45.65 403.50,45.65 422.83,45.65 442.17,45.65 461.50,45.65 480.83,45.65 500.17,45.65 519.50,45.65 538.83,45.65 558.17,45.65 577.50,45.65 596.83,45.65 616.17,45.65 635.50,45.65 654.83,45.65 674.17,45.65 693.50,45.65 712.83,45.65 732.17,45.65 751.50,45.65 770.83,45.65 790.17,45.65 809.50,45.65 828.83,45.65 848.17,45.65 867.50,45.65 886.83,45.65 906.17,45.65 925.50,45.65 944.83,45.65 964.17,45.65 983.50,45.65 1002.83,45.65 1022.17,45.65 1041.50,45.65 1060.83,45.65 1080.17,45.65 1099.50,45.65 1118.83,45.65 1138.17,45.65 1157.50,45.65 1176.83,45.65 1196.17,45.65 1215.50,45.65 1234.83,45.65 1254.17,45.65 1273.50,45.65 1292.83,45.65 1312.17,45.65 1331.50,45.65 1350.83,45.65 1370.17,45.65 1389.50,45.65" fill="none" stroke="#566506" stroke-opacity="0.6" stroke-width="1.5" stroke-linejoin="round"/>
<polygon points="55.50,223.50 55.50,211.15 74.83,211.15 94.17,211.15 113.50,211.15 132.83,211.15 152.17,211.15 171.50,211.15 190.83,211.15 210.17,211.15 229.50,211.15 248.83,211.15 268.17,211.15 287.50,211.15 306.83,211.15 326.17,211.15 345.50,211.15 364.83,211.15 384.17,211.15 403.50,211.15 422.83,211.15 442.17,211.15 461.50,211.15 480.83,211.15 500.17,211.15 519.50,211.15 538.83,211.15 558.17,211.15 577.50,211.15 596.83,211.15 616.17,211.15 635.50,211.15 654.83,211.15 674.17,211.15 693.50,211.15 712.83,211.15 732.17,211.15 751.50,211.15 770.83,211.15 790.17,211.15 809.50,211.15 828.83,211.15 848.17,211.15 867.50,211.15 886.83,211.15 906.17,211.15 925.50,211.15 944.83,211.15 964.17,211.15 983.50,211.15 1002.83,211.15 1022.17,211.15 1041.50,211.15 1060.83,211.15 1080.17,211.15 1099.50,211.15 1118.83,211.15 1138.17,211.15 1157.50,211.15 1176.83,211.15 1196.17,211.15 1215.50,211.15 1234.83,211.15 1254.17,211.15 1273.50,211.15 1292.83,211.15 1312.17,211.15 1331.50,211.15 1350.83,211.15 1370.17,209.02 1389.50,207.48 1389.50,223.50" fill="#115fa6" fill-opacity="0.6"/><polyline points="55.50,211.15 74.83,211.15 94.17,211.15 113.50,211.15 132.83,211.15 152.17,211.15 171.50,211.15 190.83,211.15 210.17,211.15 229.50,211.15 248.83,211.15 268.17,211.15 287.50,211.15 306.83,211.15 326.17,211.15 345.50,211.15 364.83,211.15 384.17,211.15 403.50,211.15 422.83,211.15 442.17,211.15 461.50,211.15 480.83,211.15 500.17,211.15 519.50,211.15 538.83,211.15 558.17,211.15 577.50,211.15 596.83,211.15 616.17,211.15 635.50,211.15 654.83,211.15 674.17,211.15 693.50,211.15 712.83,211.15 732.17,211.15 751.50,211.15 770.83,211.15 790.17,211.15 809.50,211.15 828.83,211.15 848.17,211.15 867.50,211.15 886.83,211.15 906.17,211.15 925.50,211.15 944.83,211.15 964.17,211.15 983.50,211.15 1002.83,211.15 1022.17,211.15 1041.50,211.15 1060.83,211.15 1080.17,211.15 1099.50,211.15 1118.83,211.15 1138.17,211.15 1157.50,211.15 1176.83,211.15 1196.17,211.15 1215.50,211.15 1234.83,211.15 1254.17,211.15 1273.50,211.15 1292.83,211.15 1312.17,211.15 1331.50,211.15 1350.83,211.15 1370.17,209.02 1389.50,207.48" fill="none" stroke="#0a3861" stroke-opacity="0.6" stroke-width="1.5" stroke-linejoin="round"/>
<path d="M55.5 10.0V224.0M55.0 223.5H1390.0M51.0 223.5H55.5M51.0 180.5H55.5M51.0 138.5H55.5M51.0 95.5H55.5M51.0 53.5H55.5M51.0 10.5H55.5M55.5 223.5V228.0M74.5 223.5V228.0M94.5 223.5V228.0M113.5 223.5V228.0M132.5 223.5V228.0M152.5 223.5V228.0M171.5 223.5V228.0M190.5 223.5V228.0M210.5 223.5V228.0M229.5 223.5V228.0M248.5 223.5V228.0M268.5 223.5V228.0M287.5 223.5V228.0M306.5 223.5V228.0M326.5 223.5V228.0M345.5 223.5V228.0M364.5 223.5V228.0M384.5 223.5V228.0M403.5 223.5V228.0M422.5 223.5V228.0M442.5 223.5V228.0M461.5 223.5V228.0M480.5 223.5V228.0M500.5 223.5V228.0M519.5 223.5V228.0M538.5 223.5V228.0M558.5 223.5V228.0M577.5 223.5V228.0M596.5 223.5V228.0M616.5 223.5V228.0M635.5 223.5V228.0M654.5 223.5V228.0M674.5 223.5V228.0M693.5 223.5V228.0M712.5 223.5V228.0M732.5 223.5V228.0M751.5 223.5V228.0M770.5 223.5V228.0M790.5 223.5V228.0M809.5 223.5V228.0M828.5 223.5V228.0M848.5 223.5V228.0M867.5 223.5V228.0M886.5 223.5V228.0M906.5 223.5V228.0M925.5 223.5V228.0M944.5 223.5V228.0M964.5 223.5V228.0M983.5 223.5V228.0M1002.5 223.5V228.0M1022.5 223.5V228.0M1041.5 223.5V228.0M1060.5 223.5V228.0M1080.5 223.5V228.0M1099.5 223.5V228.0M1118.5 223.5V228.0M1138.5 223.5V228.0M1157.5 223.5V228.0M1176.5 223.5V228.0M1196.5 223.5V228.0M1215.5 223.5V228.0M1234.5 223.5V228.0M1254.5 223.5V228.0M1273.5 223.5V228.0M1292.5 223.5V228.0M1312.5 223.5V228.0M1331.5 223.5V228.0M1350.5 223.5V228.0M1370.5 223.5V228.0M1389.5 223.5V228.0" stroke="#000" stroke-width="1" fill="none"/>
<text x="27.5" y="227.1" text-anchor="middle">0</text>
<text x="29.4" y="184.1" text-anchor="middle">500 M</text>
<text x="29.4" y="142.1" text-anchor="middle">1 G</text>
<text x="29.4" y="99.1" text-anchor="middle">1.5 G</text>
<text x="29.4" y="57.1" text-anchor="middle">2 G</text>
<text x="29.4" y="14.1" text-anchor="middle">2.5 G</text>
<text x="56.9" y="242.9" text-anchor="middle">2020-11-06</text>
<text x="56.3" y="258.1" text-anchor="middle">10:58:00</text>
<text x="134.2" y="242.9" text-anchor="middle">2020-11-06</text>
<text x="133.6" y="258.1" text-anchor="middle">11:02:00</text>
<text x="211.6" y="242.9" text-anchor="middle">2020-11-06</text>
<text x="211.0" y="258.1" text-anchor="middle">11:06:00</text>
<text x="288.9" y="242.9" text-anchor="middle">2020-11-06</text>
<text x="288.3" y="258.1" text-anchor="middle">11:10:00</text>
<text x="366.2" y="242.9" text-anchor="middle">2020-11-06</text>
<text x="365.6" y="258.1" text-anchor="middle">11:14:00</text>
<text x="443.6" y="242.9" text-anchor="middle">2020-11-06</text>
<text x="443.0" y="258.1" text-anchor="middle">11:18:00</text>
<text x="520.9" y="242.9" text-anchor="middle">2020-11-06</text>
<text x="520.3" y="258.1" text-anchor="middle">11:22:00</text>
<text x="598.2" y="242.9" text-anchor="middle">2020-11-06</text>
<text x="597.6" y="258.1" text-anchor="middle">11:26:00</text>
<text x="675.6" y="242.9" text-anchor="middle">2020-11-06</text>
<text x="675.0" y="258.1" text-anchor="middle">11:30:00</text>
<text x="752.9" y="242.9" text-anchor="middle">2020-11-06</text>
<text x="752.3" y="258.1" text-anchor="middle">11:34:00</text>
<text x="830.2" y="242.9" text-anchor="middle">2020-11-06</text>
<text x="829.6" y="258.1" text-anchor="middle">11:38:00</text>
<text x="907.6" y="242.9" text-anchor="middle">2020-11-06</text>
<text x="907.0" y="258.1" text-anchor="middle">11:42:00</text>
<text x="984.9" y="242.9" text-anchor="middle">2020-11-06</text>
<text x="984.3" y="258.1" text-anchor="middle">11:46:00</text>
<text x="1062.2" y="242.9" text-anchor="middle">2020-11-06</text>
<text x="1061.6" y="258.1" text-anchor="middle">11:50:00</text>
<text x="1139.6" y="242.9" text-anchor="middle">2020-11-06</text>
<text x="1139.0" y="258.1" text-anchor="middle">11:54:00</text>
<text x="1216.9" y="242.9" text-anchor="middle">2020-11-06</text>
<text x="1216.3" y="258.1" text-anchor="middle">11:58:00</text>
<text x="1294.2" y="242.9" text-anchor="middle">2020-11-06</text>
<text x="1293.6" y="258.1" text-anchor="middle">12:02:00</text>
<text x="1371.6" y="242.9" text-anchor="middle">2020-11-06</text>
<text x="1371.0" y="258.1" text-anchor="middle">12:06:00</text>
</svg>
<div class="ph" style="top:1122px"><span class="pt">Swap usage</span></div>
<div class="pb" style="top:1158px"></div>
<div class="lg" style="left:1387px;top:1127px;width:169px"><b></b><span class="li"><i style="background:#94ae0a"></i>Total</span><span class="li"><i style="background:#115fa6"></i>Swap usage</span></div>
<div class="tool" style="top:1132px"><svg width="16" height="16" viewBox="0 0 16 16" opacity="0.3"><circle cx="8" cy="7.9" r="7.45" fill="none" stroke="#3892d4" stroke-width="1"/><path d="M3.05 7.5H13" stroke="#3892d4" stroke-width="1"/></svg></div>
<svg class="ch" style="left:189px;top:1159px" width="1398" height="271" viewBox="0 0 1398 271" font-family='"Liberation Sans", sans-serif' font-size="13">
<path d="M74.5 10.0V223.0M94.5 10.0V223.0M113.5 10.0V223.0M132.5 10.0V223.0M152.5 10.0V223.0M171.5 10.0V223.0M190.5 10.0V223.0M210.5 10.0V223.0M229.5 10.0V223.0M248.5 10.0V223.0M268.5 10.0V223.0M287.5 10.0V223.0M306.5 10.0V223.0M326.5 10.0V223.0M345.5 10.0V223.0M364.5 10.0V223.0M384.5 10.0V223.0M403.5 10.0V223.0M422.5 10.0V223.0M442.5 10.0V223.0M461.5 10.0V223.0M480.5 10.0V223.0M500.5 10.0V223.0M519.5 10.0V223.0M538.5 10.0V223.0M558.5 10.0V223.0M577.5 10.0V223.0M596.5 10.0V223.0M616.5 10.0V223.0M635.5 10.0V223.0M654.5 10.0V223.0M674.5 10.0V223.0M693.5 10.0V223.0M712.5 10.0V223.0M732.5 10.0V223.0M751.5 10.0V223.0M770.5 10.0V223.0M790.5 10.0V223.0M809.5 10.0V223.0M828.5 10.0V223.0M848.5 10.0V223.0M867.5 10.0V223.0M886.5 10.0V223.0M906.5 10.0V223.0M925.5 10.0V223.0M944.5 10.0V223.0M964.5 10.0V223.0M983.5 10.0V223.0M1002.5 10.0V223.0M1022.5 10.0V223.0M1041.5 10.0V223.0M1060.5 10.0V223.0M1080.5 10.0V223.0M1099.5 10.0V223.0M1118.5 10.0V223.0M1138.5 10.0V223.0M1157.5 10.0V223.0M1176.5 10.0V223.0M1196.5 10.0V223.0M1215.5 10.0V223.0M1234.5 10.0V223.0M1254.5 10.0V223.0M1273.5 10.0V223.0M1292.5 10.0V223.0M1312.5 10.0V223.0M1331.5 10.0V223.0M1350.5 10.0V223.0M1370.5 10.0V223.0M1389.5 10.0V223.0M56.0 199.5H1390.0M56.0 176.5H1390.0M56.0 152.5H1390.0M56.0 128.5H1390.0M56.0 105.5H1390.0M56.0 81.5H1390.0M56.0 57.5H1390.0M56.0 34.5H1390.0M56.0 10.5H1390.0" stroke="#dcdcdc" stroke-width="1" fill="none"/>
<polygon points="55.50,223.50 55.50,19.30 74.83,19.30 94.17,19.30 113.50,19.30 132.83,19.30 152.17,19.30 171.50,19.30 190.83,19.30 210.17,19.30 229.50,19.30 248.83,19.30 268.17,19.30 287.50,19.30 306.83,19.30 326.17,19.30 345.50,19.30 364.83,19.30 384.17,19.30 403.50,19.30 422.83,19.30 442.17,19.30 461.50,19.30 480.83,19.30 500.17,19.30 519.50,19.30 538.83,19.30 558.17,19.30 577.50,19.30 596.83,19.30 616.17,19.30 635.50,19.30 654.83,19.30 674.17,19.30 693.50,19.30 712.83,19.30 732.17,19.30 751.50,19.30 770.83,19.30 790.17,19.30 809.50,19.30 828.83,19.30 848.17,19.30 867.50,19.30 886.83,19.30 906.17,19.30 925.50,19.30 944.83,19.30 964.17,19.30 983.50,19.30 1002.83,19.30 1022.17,19.30 1041.50,19.30 1060.83,19.30 1080.17,19.30 1099.50,19.30 1118.83,19.30 1138.17,19.30 1157.50,19.30 1176.83,19.30 1196.17,19.30 1215.50,19.30 1234.83,19.30 1254.17,19.30 1273.50,19.30 1292.83,19.30 1312.17,19.30 1331.50,19.30 1350.83,19.30 1370.17,19.30 1389.50,19.30 1389.50,223.50" fill="#94ae0a" fill-opacity="0.6"/><polyline points="55.50,19.30 74.83,19.30 94.17,19.30 113.50,19.30 132.83,19.30 152.17,19.30 171.50,19.30 190.83,19.30 210.17,19.30 229.50,19.30 248.83,19.30 268.17,19.30 287.50,19.30 306.83,19.30 326.17,19.30 345.50,19.30 364.83,19.30 384.17,19.30 403.50,19.30 422.83,19.30 442.17,19.30 461.50,19.30 480.83,19.30 500.17,19.30 519.50,19.30 538.83,19.30 558.17,19.30 577.50,19.30 596.83,19.30 616.17,19.30 635.50,19.30 654.83,19.30 674.17,19.30 693.50,19.30 712.83,19.30 732.17,19.30 751.50,19.30 770.83,19.30 790.17,19.30 809.50,19.30 828.83,19.30 848.17,19.30 867.50,19.30 886.83,19.30 906.17,19.30 925.50,19.30 944.83,19.30 964.17,19.30 983.50,19.30 1002.83,19.30 1022.17,19.30 1041.50,19.30 1060.83,19.30 1080.17,19.30 1099.50,19.30 1118.83,19.30 1138.17,19.30 1157.50,19.30 1176.83,19.30 1196.17,19.30 1215.50,19.30 1234.83,19.30 1254.17,19.30 1273.50,19.30 1292.83,19.30 1312.17,19.30 1331.50,19.30 1350.83,19.30 1370.17,19.30 1389.50,19.30" fill="none" stroke="#566506" stroke-opacity="0.6" stroke-width="1.5" stroke-linejoin="round"/>
<polygon points="55.50,223.50 55.50,223.50 74.83,223.50 94.17,223.50 113.50,223.50 132.83,223.50 152.17,223.50 171.50,223.50 190.83,223.50 210.17,223.50 229.50,223.50 248.83,223.50 268.17,223.50 287.50,223.50 306.83,223.50 326.17,223.50 345.50,223.50 364.83,223.50 384.17,223.50 403.50,223.50 422.83,223.50 442.17,223.50 461.50,223.50 480.83,223.50 500.17,223.50 519.50,223.50 538.83,223.50 558.17,223.50 577.50,223.50 596.83,223.50 616.17,223.50 635.50,223.50 654.83,223.50 674.17,223.50 693.50,223.50 712.83,223.50 732.17,223.50 751.50,223.50 770.83,223.50 790.17,223.50 809.50,223.50 828.83,223.50 848.17,223.50 867.50,223.50 886.83,223.50 906.17,223.50 925.50,223.50 944.83,223.50 964.17,223.50 983.50,223.50 1002.83,223.50 1022.17,223.50 1041.50,223.50 1060.83,223.50 1080.17,223.50 1099.50,223.50 1118.83,223.50 1138.17,223.50 1157.50,223.50 1176.83,223.50 1196.17,223.50 1215.50,223.50 1234.83,223.50 1254.17,223.50 1273.50,223.50 1292.83,223.50 1312.17,223.50 1331.50,223.50 1350.83,223.50 1370.17,223.50 1389.50,223.50 1389.50,223.50" fill="#115fa6" fill-opacity="0.6"/><polyline points="55.50,223.50 74.83,223.50 94.17,223.50 113.50,223.50 132.83,223.50 152.17,223.50 171.50,223.50 190.83,223.50 210.17,223.50 229.50,223.50 248.83,223.50 268.17,223.50 287.50,223.50 306.83,223.50 326.17,223.50 345.50,223.50 364.83,223.50 384.17,223.50 403.50,223.50 422.83,223.50 442.17,223.50 461.50,223.50 480.83,223.50 500.17,223.50 519.50,223.50 538.83,223.50 558.17,223.50 577.50,223.50 596.83,223.50 616.17,223.50 635.50,223.50 654.83,223.50 674.17,223.50 693.50,223.50 712.83,223.50 732.17,223.50 751.50,223.50 770.83,223.50 790.17,223.50 809.50,223.50 828.83,223.50 848.17,223.50 867.50,223.50 886.83,223.50 906.17,223.50 925.50,223.50 944.83,223.50 964.17,223.50 983.50,223.50 1002.83,223.50 1022.17,223.50 1041.50,223.50 1060.83,223.50 1080.17,223.50 1099.50,223.50 1118.83,223.50 1138.17,223.50 1157.50,223.50 1176.83,223.50 1196.17,223.50 1215.50,223.50 1234.83,223.50 1254.17,223.50 1273.50,223.50 1292.83,223.50 1312.17,223.50 1331.50,223.50 1350.83,223.50 1370.17,223.50 1389.50,223.50" fill="none" stroke="#0a3861" stroke-opacity="0.6" stroke-width="1.5" stroke-linejoin="round"/>
<path d="M55.5 10.0V224.0M55.0 223.5H1390.0M51.0 223.5H55.5M51.0 199.5H55.5M51.0 176.5H55.5M51.0 152.5H55.5M51.0 128.5H55.5M51.0 105.5H55.5M51.0 81.5H55.5M51.0 57.5H55.5M51.0 34.5H55.5M51.0 10.5H55.5M55.5 223.5V228.0M74.5 223.5V228.0M94.5 223.5V228.0M113.5 223.5V228.0M132.5 223.5V228.0M152.5 223.5V228.0M171.5 223.5V228.0M190.5 223.5V228.0M210.5 223.5V228.0M229.5 223.5V228.0M248.5 223.5V228.0M268.5 223.5V228.0M287.5 223.5V228.0M306.5 223.5V228.0M326.5 223.5V228.0M345.5 223.5V228.0M364.5 223.5V228.0M384.5 223.5V228.0M403.5 223.5V228.0M422.5 223.5V228.0M442.5 223.5V228.0M461.5 223.5V228.0M480.5 223.5V228.0M500.5 223.5V228.0M519.5 223.5V228.0M538.5 223.5V228.0M558.5 223.5V228.0M577.5 223.5V228.0M596.5 223.5V228.0M616.5 223.5V228.0M635.5 223.5V228.0M654.5 223.5V228.0M674.5 223.5V228.0M693.5 223.5V228.0M712.5 223.5V228.0M732.5 223.5V228.0M751.5 223.5V228.0M770.5 223.5V228.0M790.5 223.5V228.0M809.5 223.5V228.0M828.5 223.5V228.0M848.5 223.5V228.0M867.5 223.5V228.0M886.5 223.5V228.0M906.5 223.5V228.0M925.5 223.5V228.0M944.5 223.5V228.0M964.5 223.5V228.0M983.5 223.5V228.0M1002.5 223.5V228.0M1022.5 223.5V228.0M1041.5 223.5V228.0M1060.5 223.5V228.0M1080.5 223.5V228.0M1099.5 223.5V228.0M1118.5 223.5V228.0M1138.5 223.5V228.0M1157.5 223.5V228.0M1176.5 223.5V228.0M1196.5 223.5V228.0M1215.5 223.5V228.0M1234.5 223.5V228.0M1254.5 223.5V228.0M1273.5 223.5V228.0M1292.5 223.5V228.0M1312.5 223.5V228.0M1331.5 223.5V228.0M1350.5 223.5V228.0M1370.5 223.5V228.0M1389.5 223.5V228.0" stroke="#000" stroke-width="1" fill="none"/>
<text x="27.5" y="227.1" text-anchor="middle">0</text>
<text x="29.4" y="203.1" text-anchor="middle">500 M</text>
<text x="29.4" y="180.1" text-anchor="middle">1 G</text>
<text x="29.4" y="156.1" text-anchor="middle">1.5 G</text>
<text x="29.4" y="132.1" text-anchor="middle">2 G</text>
<text x="29.4" y="109.1" text-anchor="middle">2.5 G</text>
<text x="29.4" y="85.1" text-anchor="middle">3 G</text>
<text x="29.4" y="61.1" text-anchor="middle">3.5 G</text>
<text x="29.4" y="38.1" text-anchor="middle">4 G</text>
<text x="29.4" y="14.1" text-anchor="middle">4.5 G</text>
<text x="56.9" y="242.9" text-anchor="middle">2020-11-06</text>
<text x="56.3" y="258.1" text-anchor="middle">10:58:00</text>
<text x="134.2" y="242.9" text-anchor="middle">2020-11-06</text>
<text x="133.6" y="258.1" text-anchor="middle">11:02:00</text>
<text x="211.6" y="242.9" text-anchor="middle">2020-11-06</text>
<text x="211.0" y="258.1" text-anchor="middle">11:06:00</text>
<text x="288.9" y="242.9" text-anchor="middle">2020-11-06</text>
<text x="288.3" y="258.1" text-anchor="middle">11:10:00</text>
<text x="366.2" y="242.9" text-anchor="middle">2020-11-06</text>
<text x="365.6" y="258.1" text-anchor="middle">11:14:00</text>
<text x="443.6" y="242.9" text-anchor="middle">2020-11-06</text>
<text x="443.0" y="258.1" text-anchor="middle">11:18:00</text>
<text x="520.9" y="242.9" text-anchor="middle">2020-11-06</text>
<text x="520.3" y="258.1" text-anchor="middle">11:22:00</text>
<text x="598.2" y="242.9" text-anchor="middle">2020-11-06</text>
<text x="597.6" y="258.1" text-anchor="middle">11:26:00</text>
<text x="675.6" y="242.9" text-anchor="middle">2020-11-06</text>
<text x="675.0" y="258.1" text-anchor="middle">11:30:00</text>
<text x="752.9" y="242.9" text-anchor="middle">2020-11-06</text>
<text x="752.3" y="258.1" text-anchor="middle">11:34:00</text>
<text x="830.2" y="242.9" text-anchor="middle">2020-11-06</text>
<text x="829.6" y="258.1" text-anchor="middle">11:38:00</text>
<text x="907.6" y="242.9" text-anchor="middle">2020-11-06</text>
<text x="907.0" y="258.1" text-anchor="middle">11:42:00</text>
<text x="984.9" y="242.9" text-anchor="middle">2020-11-06</text>
<text x="984.3" y="258.1" text-anchor="middle">11:46:00</text>
<text x="1062.2" y="242.9" text-anchor="middle">2020-11-06</text>
<text x="1061.6" y="258.1" text-anchor="middle">11:50:00</text>
<text x="1139.6" y="242.9" text-anchor="middle">2020-11-06</text>
<text x="1139.0" y="258.1" text-anchor="middle">11:54:00</text>
<text x="1216.9" y="242.9" text-anchor="middle">2020-11-06</text>
<text x="1216.3" y="258.1" text-anchor="middle">11:58:00</text>
<text x="1294.2" y="242.9" text-anchor="middle">2020-11-06</text>
<text x="1293.6" y="258.1" text-anchor="middle">12:02:00</text>
<text x="1371.6" y="242.9" text-anchor="middle">2020-11-06</text>
<text x="1371.0" y="258.1" text-anchor="middle">12:06:00</text>
</svg>
</div>
</div>
</body></html>
